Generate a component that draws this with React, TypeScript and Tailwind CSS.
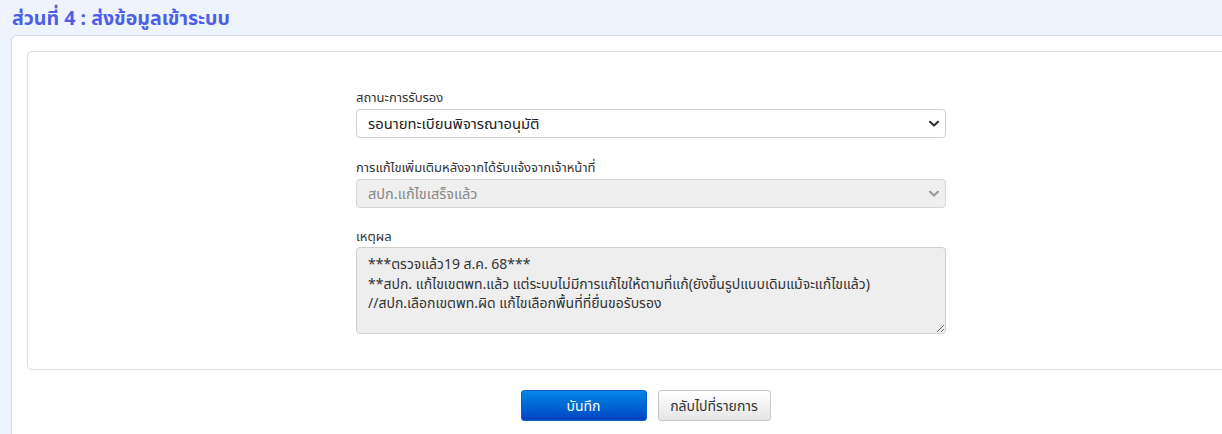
import React from "react";

const Chevron = ({ color }: { color: string }) => (
  <svg width="10" height="7" viewBox="0 0 10 7" className="absolute right-[6px] top-1/2 -translate-y-1/2 pointer-events-none">
    <path d="M1 1.2 L5 5 L9 1.2" fill="none" stroke={color} strokeWidth="2.2" strokeLinecap="round" strokeLinejoin="round" />
  </svg>
);

export default function App() {
  const font = { fontFamily: '"Noto Sans", "Noto Sans Thai", Tahoma, sans-serif' };
  return (
    <div className="w-[1222px] h-[434px] overflow-hidden bg-[#eef4fd]" style={font}>
      <h1 className="pl-[12px] pt-[5px] h-[35px] text-[19.6px] font-bold leading-[26px] text-[#4f5ee8]">
        ส่วนที่ 4 : ส่งข้อมูลเข้าระบบ
      </h1>
      <div className="ml-[11px] w-[1270px] h-[420px] bg-white border-t border-l border-[#d8dbe0] rounded-tl-[6px] pt-[15px] px-[15px]">
        <div className="h-[319px] border border-[#dcdcdc] rounded-[5px] flex justify-center pt-[36px]">
          <div className="w-[590px] ml-[9px] flex flex-col">
            <label className="text-[13px] leading-[18px] text-[#333] mb-[3px]">สถานะการรับรอง</label>
            <div className="relative h-[29px] border border-[#cfcfcf] rounded-[4px] bg-white flex items-center pl-[11px]">
              <span className="text-[14.8px] text-[#222]">รอนายทะเบียนพิจารณาอนุมัติ</span>
              <Chevron color="#333" />
            </div>
            <label className="mt-[20px] text-[13px] leading-[18px] text-[#333] mb-[3px]">การแก้ไขเพิ่มเติมหลังจากได้รับแจ้งจากเจ้าหน้าที่</label>
            <div className="relative h-[29px] border border-[#d6d6d6] rounded-[4px] bg-[#efefef] flex items-center pl-[11px]">
              <span className="text-[14.5px] text-[#888]">สปก.แก้ไขเสร็จแล้ว</span>
              <Chevron color="#999" />
            </div>
            <label className="mt-[19px] text-[13px] leading-[18px] text-[#333] mb-[2px]">เหตุผล</label>
            <textarea
              readOnly
              className="h-[87px] border border-[#cfcfcf] rounded-[4px] bg-[#eeeeee] px-[11px] pt-[6px] text-[14px] leading-[19.5px] text-[#333] outline-none"
              style={font}
              defaultValue={"***ตรวจแล้ว19 ส.ค. 68***\n**สปก. แก้ไขเขตพท.แล้ว แต่ระบบไม่มีการแก้ไขให้ตามที่แก้(ยังขึ้นรูปแบบเดิมแม้จะแก้ไขแล้ว)\n//สปก.เลือกเขตพท.ผิด แก้ไขเลือกพื้นที่ที่ยื่นขอรับรอง"}
            />
          </div>
        </div>
        <div className="flex justify-center gap-[11px] mt-[20px] ml-[-2px]">
          <button className="w-[126px] h-[31px] rounded-[3px] border border-[#0b5fc4] bg-gradient-to-b from-[#0a86e6] to-[#0044c2] text-white text-[14px]">
            บันทึก
          </button>
          <button className="w-[113px] h-[31px] rounded-[3px] border border-[#c8c8c8] bg-gradient-to-b from-white to-[#e6e6e6] text-[#333] text-[14px]">
            กลับไปที่รายการ
          </button>
        </div>
      </div>
    </div>
  );
}
